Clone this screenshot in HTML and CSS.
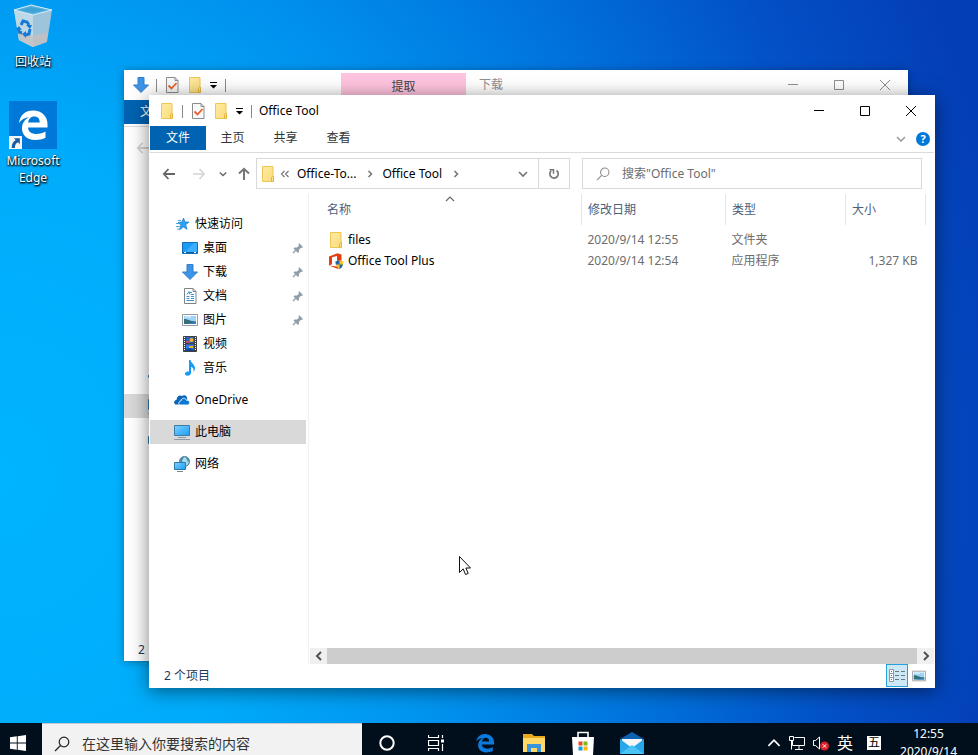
FILE: index.html
```html
<!DOCTYPE html>
<html lang="zh-CN">
<head>
    <meta charset="UTF-8">
    <meta name="viewport" content="width=device-width, initial-scale=1.0">
    <title>Office Tool</title>
    <link rel="stylesheet" href="styles.css">
</head>
<body>
    <!-- Shared icons -->
    <svg class="sprite" aria-hidden="true">
        <defs>
            <linearGradient id="folderFill" x1="0" y1="0" x2="1" y2="1"><stop offset="0" stop-color="#ffeba3"/><stop offset="1" stop-color="#fbdc7c"/></linearGradient>
            <linearGradient id="screenFill" x1="0" y1="0" x2="1" y2="1"><stop offset="0" stop-color="#7fd0ff"/><stop offset="1" stop-color="#1b9df5"/></linearGradient>
        </defs>
        <symbol id="i-folder" viewBox="0 0 16 16">
            <path d="M2.5.5h10.500v15H2.500z" fill="url(#folderFill)" stroke="#edc654"/>
            <path d="M11.500 15.500v-4l1-1h1v5z" fill="#fbe08a" stroke="#e3b53c"/>
        </symbol>
        <symbol id="i-check" viewBox="0 0 16 16">
            <path d="M2.500.5h8.500l3 3v12H2.500z" fill="#f8f8f8" stroke="#8c8c8c"/>
            <path d="M11 .5v3h3" fill="none" stroke="#8c8c8c"/>
            <path d="M4.500 8.500l3 3 5-5.500" fill="none" stroke="#e8602a" stroke-width="1.800"/>
        </symbol>
        <symbol id="i-drop" viewBox="0 0 8 8"><path d="M0 1h7v1H0zM0 4h7L3.500 7.500z" fill="currentColor"/></symbol>
        <symbol id="i-download" viewBox="0 0 16 16"><path d="M5 .5h6V8h4.500L8 15.500.5 8H5z" fill="#3c94e6" stroke="#2f7fcb"/></symbol>
        <symbol id="i-min" viewBox="0 0 12 12"><path d="M1 5.500h10" stroke="currentColor"/></symbol>
        <symbol id="i-max" viewBox="0 0 12 12"><path d="M1.500 1.500h9v9h-9z" fill="none" stroke="currentColor"/></symbol>
        <symbol id="i-close" viewBox="0 0 12 12"><path d="M1 1l10 10M11 1L1 11" stroke="currentColor"/></symbol>
        <symbol id="i-back" viewBox="0 0 14 14"><path d="M13 7H2M6.500 2L1.800 7l4.700 5" fill="none" stroke="currentColor" stroke-width="1.800"/></symbol>
        <symbol id="i-forward" viewBox="0 0 14 14"><path d="M1 7h11M7.500 2l4.700 5-4.700 5" fill="none" stroke="currentColor" stroke-width="1.500"/></symbol>
        <symbol id="i-up" viewBox="0 0 14 14"><path d="M7 13V2M2 6.500L7 1.800l5 4.700" fill="none" stroke="currentColor" stroke-width="2"/></symbol>
        <symbol id="i-chev-down" viewBox="0 0 10 10"><path d="M1 3l4 4 4-4" fill="none" stroke="currentColor" stroke-width="1.700"/></symbol>
        <symbol id="i-chev-up" viewBox="0 0 10 10"><path d="M1 7l4-4 4 4" fill="none" stroke="currentColor" stroke-width="1.200"/></symbol>
        <symbol id="i-chev-right" viewBox="0 0 10 10"><path d="M3.500 2L6.500 5l-3 3" fill="none" stroke="currentColor" stroke-width="1.600"/></symbol>
        <symbol id="i-scroll-left" viewBox="0 0 10 10"><path d="M7 1L3 5l4 4" fill="none" stroke="currentColor" stroke-width="2"/></symbol>
        <symbol id="i-scroll-right" viewBox="0 0 10 10"><path d="M3 1l4 4-4 4" fill="none" stroke="currentColor" stroke-width="2"/></symbol>
        <symbol id="i-double" viewBox="0 0 10 10"><path d="M4.500 2L1.500 5l3 3M8.500 2l-3 3 3 3" fill="none" stroke="currentColor" stroke-width="1.200"/></symbol>
        <symbol id="i-refresh" viewBox="0 0 12 12"><path d="M8.500 2.500A4.200 4.200 0 1 1 3.200 2.800" fill="none" stroke="currentColor" stroke-width="1.700"/><path d="M1.500 1.800h4v4" fill="none" stroke="currentColor" stroke-width="1.500"/></symbol>
        <symbol id="i-search" viewBox="0 0 16 16"><circle cx="10" cy="6" r="4.800" fill="none" stroke="currentColor" stroke-width="1.200"/><path d="M6.500 9.500L1 15" stroke="currentColor" stroke-width="1.300"/></symbol>
        <symbol id="i-star" viewBox="0 0 16 16"><path d="M9.500 2l1.500 4 4 .1-3.300 2.700 1.300 4.500-3.600-2.300-3.800 2.800 1.400-4.700L4 6.500l4-.5z" fill="#2ba3f2" stroke="#1a78c2" stroke-width=".7"/><path d="M4 4.500h3M2 7.500h3M2 10.500h4M3 13h3" stroke="#4aa9e8"/></symbol>
        <symbol id="i-desktop" viewBox="0 0 16 16"><path d="M.5 2.500h15v11H.5z" fill="#1a9cf5" stroke="#106fba"/><path d="M3 12L12 3h3v9z" fill="#3aaeff"/><path d="M1 12.500h14" stroke="#0c5b9d"/><path d="M2 12.500h2m8 0h2" stroke="#fff"/></symbol>
        <symbol id="i-document" viewBox="0 0 16 16"><path d="M2.500.5h8.500l3 3v12H2.500z" fill="#fff" stroke="#7d8489"/><path d="M11 .5v3h3" fill="none" stroke="#7d8489"/><path d="M5 6.500l2-3 1 3M8 4.500h2M4.500 8.500h3m1.500 0h3M4.500 10.500h3m1.500 0h3M4.500 12.500h7.500M9 6.500h3" fill="none" stroke="#3a91c8"/></symbol>
        <symbol id="i-picture" viewBox="0 0 16 16"><path d="M.5 2.500h15v11H.5z" fill="#fff" stroke="#949a9e"/><path d="M2 4h12v8H2z" fill="#9cd3f7"/><path d="M2 7c4 0 5 2 12 2.500V12H2z" fill="#376e7b"/><path d="M5 12l9-2v2z" fill="#3583c8"/><path d="M3 5h6" stroke="#e4f6ff"/></symbol>
        <symbol id="i-video" viewBox="0 0 16 16"><path d="M1.500.5h13v15h-13z" fill="#3e4144" stroke="#3e4144"/><path d="M4 1h8v6H4z" fill="#315fba"/><path d="M4 8.500h8V15H4z" fill="#2f78df"/><circle cx="9.500" cy="4" r="2" fill="#f3b22d"/><path d="M4 5h4v2H4z" fill="#ba4d73"/><path d="M7 10h4v2H7z" fill="#eab431"/><path d="M4 13l4-1 4 2v1H4z" fill="#16458d"/><path d="M2.500 1v14M13.500 1v14" stroke="#fff" stroke-dasharray="1 1"/></symbol>
        <symbol id="i-music" viewBox="0 0 16 16"><path d="M7 0h1.500c.5 3 4.500 4.500 4.500 8 0 1.500-.7 3-1.500 4 .5-3-.5-4.500-2.500-5V13c0 1.600-1.800 2.800-3.500 2.800S2.500 14.800 3 13.300C3.500 11.800 5.500 11.200 7 11.500z" fill="#169cf0"/></symbol>
        <symbol id="i-onedrive" viewBox="0 0 16 16"><path d="M1.500 12.500C-.8 11.500 0 7.800 2.500 8 2.500 4.500 5.500 2.300 8 4c2.500-2 5.500 0 5.200 3 .2 2-3 3-6 5.500z" fill="#0a64b8"/><path d="M5.800 13c-2-1-1-4 1-4 .5-3.500 5-3.500 5.700-.7 3.500-.8 4 4 1.500 4.700z" fill="#0a78d4" stroke="#fff" stroke-width=".9"/></symbol>
        <symbol id="i-pc" viewBox="0 0 16 16"><path d="M.5 1.500h15v10H.5z" fill="url(#screenFill)" stroke="#397caa"/><path d="M4 13.500h8M0 15.500h16" stroke="#8a9aa7"/></symbol>
        <symbol id="i-network" viewBox="0 0 16 16"><circle cx="10.500" cy="5.500" r="5" fill="#4d8fb4" stroke="#568399"/><path d="M10 1c4 1 2 4 5 5-1 3-3 4-4 4l-3-5z" fill="#a8dbec"/><path d="M.5 6.500h11v7H.5z" fill="url(#screenFill)" stroke="#2c79ad"/><path d="M3 15.500h6" stroke="#71899a"/></symbol>
        <symbol id="i-pin" viewBox="0 0 12 12"><path d="M7 1l4 4-1 1-1-.3-2 2V10L6 11 1.500 6.500l1-1H5l2-2-.5-1z" fill="#929da5"/><path d="M4 8L1 11" stroke="#929da5" stroke-width="1.300"/></symbol>
        <symbol id="i-office" viewBox="0 0 16 16"><path d="M1 3.500L9.500.3 13.500 1.500v13l-4 1.200L1 12.500l8 1V3L4 4.300v7L1 12.500z" fill="#e53d10"/><path d="M7.500 8.500L11.500 7l4 1.500c0 4-1.500 6-4 7.500-2.500-1.500-4-3.500-4-7.500z" fill="#f8c234"/><path d="M7.500 8.500L11.500 7v4.500H15c-.6 2-1.700 3.500-3.500 4.500v-4.500H8c-.4-1-.5-2-.5-3z" fill="#2467a5"/></symbol>
        <symbol id="i-details" viewBox="0 0 16 16"><path d="M.5 1.500h4v4h-4zM.5 5.500h4v4h-4zM.5 9.500h4v4h-4z" fill="#fff" stroke="#8f979c"/><path d="M6 3.500h10M6 7.500h10M6 11.500h10" stroke="#6e787e" stroke-dasharray="4 2"/><path d="M2 3.500h1M2 7.500h1" stroke="#3882c4"/><path d="M2 11.500h1" stroke="#d5343b"/></symbol>
        <symbol id="i-edge" viewBox="0 0 32 32"><path d="M2 14C3 6 8.500 1.500 16 1.500c9 0 14.500 6 14.500 13.500v3.500H11c.2 4.500 4 6.500 8.500 6.500 3.500 0 6.500-1 9-2.500v6.300c-3 1.500-6.300 2.200-10.500 2.200C9.500 31 5 25.500 5 19.500c0-5 2.500-9 7-11C7 8.500 4 11 2 14zm9.200-.5h11.500c0-4-2-6-5.500-6s-5.500 2.500-6 6z" fill="currentColor"/></symbol>
    </svg>

    <main class="desktop">
        <div class="shortcuts">
            <a class="shortcut" href="#">
                <svg class="icon48" viewBox="0 0 48 48">
                    <path d="M5 8l5 30 14 7 14-5 5-32-19 5z" fill="#9dc4da"/>
                    <path d="M5 8l19 5v32l-14-7z" fill="#bdd8e7"/>
                    <path d="M9 31l15 3 15-4-1.500 10L24 45l-14-7z" fill="#c6c0c0" opacity=".8"/>
                    <path d="M5 8l17-5 21 5-19 5z" fill="#5eb4e0" stroke="#d9eefa"/>
                    <path d="M10 8l12-3 15 3-13 3z" fill="#3fa3d6"/>
                    <g fill="none" stroke="#1879d2" stroke-width="3"><path d="M12 23l2-4 4 1 2 3"/><path d="M21 27l-1 5-4 1"/><path d="M13 31l-3-1-1-4"/></g>
                    <path d="M17 23h6l-2 4zM17 29v7l-4-4zM7 27l3-3 3 4z" fill="#1879d2"/>
                </svg>
                <span>回收站</span>
            </a>
            <a class="shortcut" href="#">
                <span class="edge-tile">
                    <svg class="icon32"><use href="#i-edge"/></svg>
                    <svg class="link-badge" viewBox="0 0 12 12"><path d="M0 0h12v12H0z" fill="#f5f5f5"/><path d="M4.500 2H10v5.500L8.300 5.800C6 7 5.500 8.500 5.500 11H2.500c0-3.500 1-5.500 3.700-7.300z" fill="#1d5ba0"/></svg>
                </span>
                <span>Microsoft Edge</span>
            </a>
        </div>

        <!-- Background window: 下载 -->
        <section class="window window-back">
            <header class="titlebar">
                <svg class="icon16"><use href="#i-download"/></svg>
                <span class="sep"></span>
                <svg class="icon16"><use href="#i-check"/></svg>
                <svg class="icon16"><use href="#i-folder"/></svg>
                <svg class="icon8"><use href="#i-drop"/></svg>
                <span class="sep"></span>
                <span class="context-tab">提取</span>
                <span class="window-title">下载</span>
                <div class="controls">
                    <button type="button" aria-label="最小化"><svg class="icon12"><use href="#i-min"/></svg></button>
                    <button type="button" aria-label="最大化"><svg class="icon12"><use href="#i-max"/></svg></button>
                    <button type="button" aria-label="关闭"><svg class="icon12"><use href="#i-close"/></svg></button>
                </div>
            </header>
            <nav class="ribbon">
                <button type="button" class="tab tab-file">文件</button>
            </nav>
            <div class="toolbar">
                <button type="button" class="nav-btn disabled" aria-label="返回"><svg class="icon14"><use href="#i-back"/></svg></button>
            </div>
            <div class="content">
                <aside class="sidebar">
                    <div class="quick-space"></div>
                    <div class="tree-item root"><svg class="icon16"><use href="#i-onedrive"/></svg></div>
                    <div class="tree-item root selected"><svg class="icon16"><use href="#i-pc"/></svg></div>
                    <div class="tree-item root"><svg class="icon16"><use href="#i-network"/></svg></div>
                </aside>
            </div>
            <footer class="statusbar"><span>2</span></footer>
        </section>

        <!-- Active window: Office Tool -->
        <section class="window window-front">
            <header class="titlebar">
                <svg class="icon16"><use href="#i-folder"/></svg>
                <span class="sep"></span>
                <svg class="icon16"><use href="#i-check"/></svg>
                <svg class="icon16"><use href="#i-folder"/></svg>
                <svg class="icon8"><use href="#i-drop"/></svg>
                <span class="sep"></span>
                <span class="window-title">Office Tool</span>
                <div class="controls">
                    <button type="button" aria-label="最小化"><svg class="icon12"><use href="#i-min"/></svg></button>
                    <button type="button" aria-label="最大化"><svg class="icon12"><use href="#i-max"/></svg></button>
                    <button type="button" aria-label="关闭"><svg class="icon12"><use href="#i-close"/></svg></button>
                </div>
            </header>
            <nav class="ribbon">
                <button type="button" class="tab tab-file">文件</button>
                <button type="button" class="tab">主页</button>
                <button type="button" class="tab">共享</button>
                <button type="button" class="tab">查看</button>
                <div class="ribbon-tools">
                    <button type="button" class="expand" aria-label="展开功能区"><svg class="icon10"><use href="#i-chev-down"/></svg></button>
                    <button type="button" class="help" aria-label="帮助">?</button>
                </div>
            </nav>
            <div class="toolbar">
                <button type="button" class="nav-btn" aria-label="返回"><svg class="icon14"><use href="#i-back"/></svg></button>
                <button type="button" class="nav-btn disabled" aria-label="前进"><svg class="icon14"><use href="#i-forward"/></svg></button>
                <button type="button" class="nav-btn small" aria-label="最近位置"><svg class="icon8"><use href="#i-chev-down"/></svg></button>
                <button type="button" class="nav-btn up" aria-label="向上"><svg class="icon14"><use href="#i-up"/></svg></button>
                <div class="address">
                    <svg class="icon16"><use href="#i-folder"/></svg>
                    <svg class="icon10"><use href="#i-double"/></svg>
                    <a href="#">Office-To...</a>
                    <svg class="icon10"><use href="#i-chev-right"/></svg>
                    <a href="#">Office Tool</a>
                    <svg class="icon10"><use href="#i-chev-right"/></svg>
                    <button type="button" class="history" aria-label="以前的位置"><svg class="icon10"><use href="#i-chev-down"/></svg></button>
                    <button type="button" class="refresh" aria-label="刷新"><svg class="icon12"><use href="#i-refresh"/></svg></button>
                </div>
                <label class="search">
                    <svg class="icon14"><use href="#i-search"/></svg>
                    <input type="text" placeholder="搜索&quot;Office Tool&quot;" aria-label="搜索">
                </label>
            </div>
            <div class="content">
                <aside class="sidebar">
                    <a class="tree-item root" href="#"><svg class="icon16"><use href="#i-star"/></svg>快速访问</a>
                    <a class="tree-item" href="#"><svg class="icon16"><use href="#i-desktop"/></svg>桌面<svg class="icon12 pin"><use href="#i-pin"/></svg></a>
                    <a class="tree-item" href="#"><svg class="icon16"><use href="#i-download"/></svg>下载<svg class="icon12 pin"><use href="#i-pin"/></svg></a>
                    <a class="tree-item" href="#"><svg class="icon16"><use href="#i-document"/></svg>文档<svg class="icon12 pin"><use href="#i-pin"/></svg></a>
                    <a class="tree-item" href="#"><svg class="icon16"><use href="#i-picture"/></svg>图片<svg class="icon12 pin"><use href="#i-pin"/></svg></a>
                    <a class="tree-item" href="#"><svg class="icon16"><use href="#i-video"/></svg>视频</a>
                    <a class="tree-item" href="#"><svg class="icon16"><use href="#i-music"/></svg>音乐</a>
                    <a class="tree-item root" href="#"><svg class="icon16"><use href="#i-onedrive"/></svg>OneDrive</a>
                    <a class="tree-item root selected" href="#"><svg class="icon16"><use href="#i-pc"/></svg>此电脑</a>
                    <a class="tree-item root" href="#"><svg class="icon16"><use href="#i-network"/></svg>网络</a>
                </aside>
                <div class="files">
                    <table>
                        <thead>
                            <tr>
                                <th class="col-name">名称<svg class="icon10 sort"><use href="#i-chev-up"/></svg></th>
                                <th class="col-date">修改日期</th>
                                <th class="col-type">类型</th>
                                <th class="col-size">大小</th>
                            </tr>
                        </thead>
                        <tbody>
                            <tr>
                                <td class="name"><a href="#"><svg class="icon16"><use href="#i-folder"/></svg>files</a></td>
                                <td>2020/9/14 12:55</td>
                                <td>文件夹</td>
                                <td class="size"></td>
                            </tr>
                            <tr>
                                <td class="name"><a href="#"><svg class="icon16"><use href="#i-office"/></svg>Office Tool Plus</a></td>
                                <td>2020/9/14 12:54</td>
                                <td>应用程序</td>
                                <td class="size">1,327 KB</td>
                            </tr>
                        </tbody>
                    </table>
                    <div class="scrollbar">
                        <button type="button" aria-label="向左滚动"><svg class="icon10"><use href="#i-scroll-left"/></svg></button>
                        <div class="thumb"></div>
                        <button type="button" aria-label="向右滚动"><svg class="icon10"><use href="#i-scroll-right"/></svg></button>
                    </div>
                </div>
            </div>
            <footer class="statusbar">
                <span>2 个项目</span>
                <div class="views">
                    <button type="button" class="view active" aria-label="详细信息"><svg class="icon16"><use href="#i-details"/></svg></button>
                    <button type="button" class="view" aria-label="大图标"><svg class="icon14"><use href="#i-picture"/></svg></button>
                </div>
            </footer>
        </section>

        <svg class="cursor" viewBox="0 0 12 20"><path d="M.5.500v16l3.700-3.600 2.300 5.600 2.700-1.100-2.300-5.400h4.600z" fill="#fff" stroke="#111"/></svg>
    </main>

    <footer class="taskbar">
        <button type="button" class="start" aria-label="开始"><svg class="icon16" viewBox="0 0 16 16"><path d="M0 2.200L6.800 1.300v6.200H0zM7.700 1.200L16 0v7.500H7.700zM0 8.400h6.800v6.300L0 13.800zM7.700 8.400H16V16l-8.300-1.200z" fill="#fff"/></svg></button>
        <label class="task-search">
            <svg class="icon16"><use href="#i-search"/></svg>
            <input type="text" placeholder="在这里输入你要搜索的内容" aria-label="搜索">
        </label>
        <button type="button" class="app" aria-label="Cortana"><svg class="icon16" viewBox="0 0 16 16"><circle cx="8" cy="8" r="6.700" fill="none" stroke="#fff" stroke-width="2"/></svg></button>
        <button type="button" class="app" aria-label="任务视图"><svg class="icon16" viewBox="0 0 16 16"><path d="M.5 0v2.500h10V0M.5 5.500h10v5H.5zM.5 16v-2.500h10V16M14.500 0v3M14.500 9v7" fill="none" stroke="#fff" stroke-width="1.200"/><path d="M13 4.500h3v3h-3z" fill="#fff"/></svg></button>
        <button type="button" class="app app-edge" aria-label="Microsoft Edge"><svg class="icon20"><use href="#i-edge"/></svg></button>
        <button type="button" class="app" aria-label="文件资源管理器"><svg class="icon22" viewBox="0 0 22 22"><path d="M0 2h9l2 2h11v4H0z" fill="#e8a91c"/><path d="M0 6h22v14H0z" fill="#ffd867"/><path d="M4 20v-8h14v8h-4v-4H8v4z" fill="#3b93dc"/></svg></button>
        <button type="button" class="app" aria-label="Microsoft Store"><svg class="icon24" viewBox="0 0 24 24"><path d="M7 7V1.500h10V7" fill="none" stroke="#fff" stroke-width="1.600"/><path d="M1 6h22l-1 18H2z" fill="#fff"/><path d="M7.500 10.500h4v4h-4z" fill="#e84b20"/><path d="M12.500 10.500h4v4h-4z" fill="#80b918"/><path d="M7.500 15.500h4v4h-4z" fill="#169ddf"/><path d="M12.500 15.500h4v4h-4z" fill="#f8b712"/></svg></button>
        <button type="button" class="app" aria-label="邮件"><svg class="icon24" viewBox="0 0 24 24"><path d="M0 8l12-7 12 7v15H0z" fill="#0c61b3"/><path d="M2 8h20v9H2z" fill="#f6f6f6"/><path d="M0 8l12 9 12-9v15H0z" fill="#28a8ea"/><path d="M0 23l12-9 12 9z" fill="#49c4f4"/></svg></button>
        <div class="tray">
            <svg class="icon14"><use href="#i-chev-up"/></svg>
            <svg class="icon16" viewBox="0 0 16 16"><path d="M5.500 2.500h10v8h-12V6M10 10.500V14M6 14.500h8M.5 1.500h4v4h-4zM2.500 5.500v9" fill="none" stroke="#fff"/></svg>
            <svg class="icon16" viewBox="0 0 16 16"><path d="M.5 5.500h2L6.500 2v12l-4-3.500h-2z" fill="none" stroke="#fff"/><circle cx="11.500" cy="11" r="4.500" fill="#d9202a"/><path d="M9.800 9.300l3.400 3.400m0-3.400l-3.400 3.400" stroke="#fff"/></svg>
            <span class="lang">英</span>
            <span class="ime">五</span>
            <div class="clock"><span>12:55</span><span>2020/9/14</span></div>
        </div>
    </footer>
</body>
</html>
```
FILE: styles.css
```css
* {
    box-sizing: border-box;
}
body {
    margin: 0;
    height: 100vh;
    overflow: hidden;
    display: flex;
    flex-direction: column;
    font-family: "Noto Sans", "Noto Sans CJK SC", sans-serif;
    font-size: 12px;
    line-height: 16px;
    color: #000;
}
button,
input {
    font: inherit;
    color: inherit;
    border: none;
    background: none;
    padding: 0;
    margin: 0;
}
button {
    display: flex;
    align-items: center;
    justify-content: center;
}
a {
    color: inherit;
    text-decoration: none;
}
svg {
    display: block;
    flex-shrink: 0;
}
.sprite {
    position: absolute;
    width: 0;
    height: 0;
}
.icon8 { width: 8px; height: 8px; }
.icon10 { width: 10px; height: 10px; }
.icon12 { width: 12px; height: 12px; }
.icon14 { width: 14px; height: 14px; }
.icon16 { width: 16px; height: 16px; }
.icon20 { width: 20px; height: 20px; }
.icon22 { width: 22px; height: 22px; }
.icon24 { width: 24px; height: 24px; }
.icon32 { width: 32px; height: 32px; }
.icon48 { width: 48px; height: 48px; }

/* Desktop */
.desktop {
    position: relative;
    flex: 1;
    min-height: 0;
    background: radial-gradient(ellipse 105% 160% at 0 66%, #00b4ff 0%, #00acfb 28%, #0096f0 45%, #0072dc 66%, #0350c6 84%, #043eb6 100%);
}
.shortcuts {
    display: flex;
    flex-direction: column;
    gap: 31px;
    width: 66px;
    padding-top: 2px;
}
.shortcut {
    display: flex;
    flex-direction: column;
    align-items: center;
    gap: 3px;
    color: #fff;
    line-height: 17px;
    text-align: center;
    text-shadow: 0 1px 2px #000, 1px 1px 2px #000;
}
.edge-tile {
    position: relative;
    display: flex;
    align-items: center;
    justify-content: center;
    width: 48px;
    height: 48px;
    background: #0078d7;
}
.link-badge {
    position: absolute;
    left: 0;
    bottom: 0;
    width: 13px;
    height: 13px;
}

/* Windows */
.window {
    position: absolute;
    display: flex;
    flex-direction: column;
    background: #fff;
}
.window-front {
    left: 149px;
    top: 95px;
    right: 43px;
    bottom: 35px;
    border: 1px solid #fff;
    box-shadow: 0 3px 18px rgba(0, 0, 0, 0.5);
}
.window-back {
    left: 124px;
    top: 70px;
    right: 70px;
    bottom: 62px;
    box-shadow: 0 1px 8px rgba(0, 0, 0, 0.35);
}
.titlebar {
    display: flex;
    align-items: center;
    gap: 7px;
    height: 30px;
    padding-left: 9px;
}
.sep {
    width: 1px;
    height: 13px;
    background: #8a8a8a;
}
.controls {
    display: flex;
    align-self: stretch;
    margin-left: auto;
}
.controls button {
    width: 46px;
}
.window-back .window-title,
.window-back .controls {
    color: #8f8f8f;
}
.context-tab {
    align-self: stretch;
    display: flex;
    align-items: center;
    justify-content: center;
    width: 125px;
    margin: 3px 6px 0 108px;
    background: #ffc4df;
    color: #444;
}

/* Ribbon */
.ribbon {
    display: flex;
    height: 27px;
    border-bottom: 1px solid #dadbdc;
}
.tab {
    width: 53px;
    height: 24px;
    color: #333;
}
.tab-file {
    width: 56px;
    background: #0063b1;
    color: #fff;
}
.ribbon-tools {
    display: flex;
    align-items: center;
    gap: 10px;
    margin-left: auto;
    padding-right: 4px;
}
.expand {
    color: #a0a0a0;
}
.help {
    width: 14px;
    height: 14px;
    border-radius: 50%;
    background: #0078d7;
    color: #fff;
    font-size: 11px;
    font-weight: bold;
}

/* Navigation and address bar */
.toolbar {
    display: flex;
    align-items: center;
    height: 41px;
    padding: 0 12px 0 4px;
}
.nav-btn {
    width: 30px;
    height: 30px;
    color: #666;
}
.nav-btn.disabled {
    color: #d4d4d4;
}
.nav-btn.small {
    width: 17px;
}
.nav-btn.up {
    width: 25px;
    color: #777;
}
.address {
    flex: 312;
    min-width: 0;
    display: flex;
    align-items: center;
    height: 31px;
    padding-left: 3px;
    gap: 4px;
    border: 1px solid #d9d9d9;
    color: #777;
}
.address a {
    padding: 0 5px 0 3px;
    color: #000;
}
.history {
    width: 30px;
    height: 29px;
    margin-left: auto;
}
.refresh {
    width: 31px;
    height: 29px;
    margin-left: -4px;
    border-left: 1px solid #d9d9d9;
}
.search {
    flex: 328;
    display: flex;
    align-items: center;
    gap: 12px;
    height: 31px;
    margin-left: 12px;
    padding-left: 13px;
    border: 1px solid #d9d9d9;
    color: #8a8a8a;
}
.search input,
.task-search input {
    flex: 1;
    min-width: 0;
    outline: none;
}
.search input::placeholder {
    color: #6d6d6d;
}

/* Folder tree */
.content {
    flex: 1;
    display: flex;
    min-height: 0;
}
.sidebar {
    width: 159px;
    padding: 18px 2px 0 0;
    border-right: 1px solid #f0f0f0;
}
.tree-item {
    display: flex;
    align-items: center;
    gap: 5px;
    height: 24px;
    padding: 0 2px 0 32px;
}
.tree-item.root {
    padding-left: 24px;
}
.tree-item ~ .tree-item.root,
.quick-space + .tree-item.root {
    margin-top: 8px;
}
.tree-item.selected {
    background: #d9d9d9;
}
.pin {
    margin-left: auto;
}
.quick-space {
    height: 168px;
}

/* File list */
.files {
    flex: 1;
    display: flex;
    flex-direction: column;
    min-width: 0;
}
table {
    table-layout: fixed;
    border-collapse: collapse;
    margin-right: 8px;
}
th {
    position: relative;
    height: 31px;
    padding: 0 6px;
    border-right: 1px solid #e5e5e5;
    font-weight: normal;
    text-align: left;
    color: #4c607a;
}
.col-name {
    padding-left: 18px;
}
.col-date {
    width: 144px;
}
.col-type {
    width: 120px;
}
.col-size {
    width: 80px;
}
.sort {
    position: absolute;
    left: 50%;
    top: 0;
    color: #666;
}
td {
    height: 21px;
    padding: 0 6px;
    color: #6d6d6d;
}
tbody::before {
    content: "";
    display: block;
    height: 4px;
}
td.name {
    padding-left: 19px;
}
td.name a {
    display: flex;
    align-items: center;
    gap: 4px;
    color: #000;
}
td.size {
    padding-right: 8px;
    text-align: right;
}
.scrollbar {
    display: flex;
    height: 16px;
    margin: auto 0 0 1px;
    background: #f0f0f0;
    color: #505050;
}
.scrollbar button {
    width: 17px;
}
.thumb {
    flex: 1;
    background: #cdcdcd;
}

/* Status bar */
.statusbar {
    display: flex;
    align-items: center;
    height: 23px;
    padding-left: 14px;
    color: #1e395b;
}
.views {
    display: flex;
    margin-left: auto;
    padding-right: 4px;
}
.view {
    width: 22px;
    height: 23px;
}
.view.active {
    background: #cce8f6;
    border: 1px solid #26a0da;
}
.cursor {
    position: absolute;
    left: 459px;
    top: 556px;
    width: 12px;
    height: 20px;
}

/* Taskbar */
.taskbar {
    display: flex;
    height: 32px;
    background: #010e1c;
    color: #fff;
}
.start,
.app,
.task-search,
.tray {
    height: 40px;
}
.start {
    width: 42px;
    padding-right: 6px;
}
.task-search {
    display: flex;
    align-items: center;
    gap: 12px;
    width: 320px;
    padding-left: 12px;
    border-top: 1px solid #c8c8c8;
    background: #f2f2f2;
    color: #222;
    font-size: 14px;
}
.task-search input::placeholder {
    color: #333;
}
.app {
    width: 49px;
}
.app-edge {
    color: #0a7bdc;
}
.tray {
    display: flex;
    align-items: center;
    gap: 8px;
    margin-left: auto;
    padding-right: 21px;
}
.lang {
    font-size: 16px;
}
.ime {
    width: 14px;
    height: 14px;
    margin: 0 11px 0 6px;
    background: #fff;
    color: #000;
    line-height: 14px;
    text-align: center;
}
.clock {
    display: flex;
    flex-direction: column;
    align-items: center;
    line-height: 18px;
}
```
